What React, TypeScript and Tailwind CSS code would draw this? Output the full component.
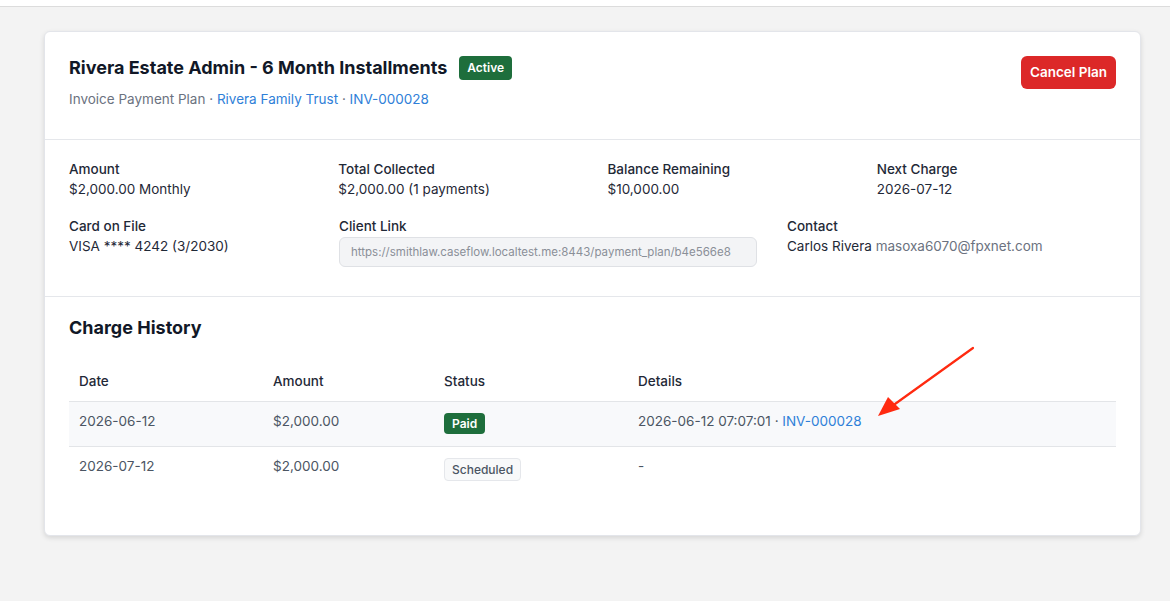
import React from 'react';

const font = { fontFamily: 'Inter, "Liberation Sans", sans-serif' };

function Info({ label, children, className = '' }: { label: string; children: React.ReactNode; className?: string }) {
  return (
    <div className={className}>
      <div className="text-[13.5px] font-medium leading-5 text-[#1f2937]">{label}</div>
      <div className="text-[13.5px] leading-5 text-[#1f2937]">{children}</div>
    </div>
  );
}

const rows = [
  { date: '2026-06-12', amount: '$2,000.00', status: 'paid', details: true },
  { date: '2026-07-12', amount: '$2,000.00', status: 'scheduled', details: false },
];

export default function App() {
  return (
    <div className="relative min-h-[601px] bg-[#f3f3f3]" style={font}>
      {/* top bar */}
      <div className="h-[7px] border-b border-[#dcdcdc] bg-white" />

      <div className="pl-[44px] pr-[29px] pt-[24px]">
        <div className="rounded-md border border-[#e3e5ea] bg-white shadow-[0_2px_5px_rgba(0,0,0,0.12)]">
          {/* header */}
          <div className="flex items-start justify-between px-6 pb-[30px] pt-6">
            <div>
              <div className="flex items-center gap-3">
                <h1 className="text-lg font-bold leading-6 text-[#111827]">Rivera Estate Admin - 6 Month Installments</h1>
                <span className="rounded bg-[#1e6e3c] px-2 py-[3px] text-xs font-semibold leading-[18px] text-white">Active</span>
              </div>
              <div className="mt-[9px] text-[13.5px] leading-5 text-[#6b7280]">
                Invoice Payment Plan · <span className="text-[#2f80d8]">Rivera Family Trust</span> ·{' '}
                <span className="text-[#2f80d8]">INV-000028</span>
              </div>
            </div>
            <button className="rounded-md bg-[#dc2828] px-[9px] py-[7px] text-[13.5px] font-semibold leading-[19px] text-white">
              Cancel Plan
            </button>
          </div>

          {/* info */}
          <div className="border-t border-[#e5e7eb] px-6 pb-[29px] pt-[19px]">
            <div className="grid grid-cols-4 gap-x-[30px]">
              <Info label="Amount">$2,000.00 Monthly</Info>
              <Info label="Total Collected">$2,000.00 (1 payments)</Info>
              <Info label="Balance Remaining">$10,000.00</Info>
              <Info label="Next Charge">2026-07-12</Info>
            </div>
            <div className="mt-[17px] flex gap-x-[30px]">
              <Info label="Card on File" className="w-[240px]">VISA **** 4242 (3/2030)</Info>
              <div className="w-[418px]">
                <div className="text-[13.5px] font-medium leading-5 text-[#1f2937]">Client Link</div>
                <div className="mt-[1px] h-[30px] overflow-hidden whitespace-nowrap rounded-md border border-[#dfe1e5] bg-[#f3f4f6] px-[11px] text-[11.5px] leading-[28px] text-[#8a8f98]">
                  https://smithlaw.caseflow.localtest.me:8443/payment_plan/b4e566e8
                </div>
              </div>
              <Info label="Contact">
                Carlos Rivera <span className="text-[#6b7280]">masoxa6070@fpxnet.com</span>
              </Info>
            </div>
          </div>

          {/* charge history */}
          <div className="border-t border-[#e5e7eb] px-6 pb-[44px] pt-[19px]">
            <h2 className="text-lg font-bold leading-6 text-[#111827]">Charge History</h2>
            <table className="mt-[21px] w-full border-collapse text-left text-[13.5px]">
              <thead>
                <tr className="border-b border-[#e3e5e8]">
                  <th className="h-10 w-[194px] px-[10px] font-medium text-[#1f2937]">Date</th>
                  <th className="w-[171px] px-[10px] font-medium text-[#1f2937]">Amount</th>
                  <th className="w-[194px] px-[10px] font-medium text-[#1f2937]">Status</th>
                  <th className="px-[10px] font-medium text-[#1f2937]">Details</th>
                </tr>
              </thead>
              <tbody>
                {rows.map((r, i) => (
                  <tr key={r.date} className={i === 0 ? 'border-b border-[#e3e5e8] bg-[#f8f9fb]' : ''}>
                    <td className="h-[45px] px-[10px] pt-[9px] align-top leading-5 text-[#4b5563]">{r.date}</td>
                    <td className="px-[10px] pt-[9px] align-top leading-5 text-[#4b5563]">{r.amount}</td>
                    <td className="px-[10px] pt-[11px] align-top leading-5">
                      {r.status === 'paid' ? (
                        <span className="inline-block rounded bg-[#1e6e3c] px-2 py-[1px] text-xs font-semibold leading-[19px] text-white">Paid</span>
                      ) : (
                        <span className="inline-block rounded border border-[#e5e7eb] bg-[#f8f9fa] px-[7px] text-xs font-medium leading-[21px] text-[#4b5563]">Scheduled</span>
                      )}
                    </td>
                    <td className="px-[10px] pt-[9px] align-top leading-5 text-[#4b5563]">
                      {r.details ? (
                        <>
                          2026-06-12 07:07:01 · <span className="text-[#2f80d8]">INV-000028</span>
                        </>
                      ) : (
                        '-'
                      )}
                    </td>
                  </tr>
                ))}
              </tbody>
            </table>
          </div>
        </div>
      </div>

      {/* annotation arrow */}
      <svg className="pointer-events-none absolute left-0 top-0" width="1170" height="601">
        <line x1="973" y1="348" x2="895" y2="404" stroke="#ff2a10" strokeWidth="2.2" strokeLinecap="round" />
        <polygon points="878,416 888,397 900,409" fill="#ff2a10" />
      </svg>
    </div>
  );
}
